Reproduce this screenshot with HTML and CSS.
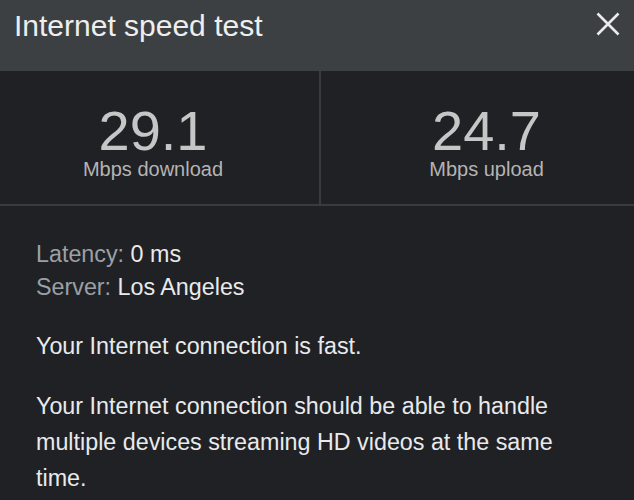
FILE: index.html
```html
<!DOCTYPE html>
<html lang="en">
<head>
    <meta charset="UTF-8">
    <meta name="viewport" content="width=device-width, initial-scale=1.0">
    <title>Internet speed test</title>
    <link rel="stylesheet" href="styles.css">
</head>
<body>

<header class="top-bar">
    <h1>Internet speed test</h1>
    <button class="close-btn" aria-label="Close">
        <svg width="24" height="24" viewBox="0 0 24 24">
            <path d="M1.5 1.5 L22.5 22.5 M22.5 1.5 L1.5 22.5" stroke="#e8eaed" stroke-width="2.6" stroke-linecap="butt" fill="none"/>
        </svg>
    </button>
</header>

<div class="stats">
    <div class="stat stat-down">
        <div class="stat-value">29.1</div>
        <div class="stat-label">Mbps download</div>
    </div>
    <div class="stat stat-up">
        <div class="stat-value">24.7</div>
        <div class="stat-label">Mbps upload</div>
    </div>
</div>

<div class="details">
    <div class="meta">
        <div><span class="meta-key">Latency:</span> 0 ms</div>
        <div><span class="meta-key">Server:</span> Los Angeles</div>
    </div>
    <p>Your Internet connection is fast.</p>
    <p>Your Internet connection should be able to handle multiple devices streaming HD videos at the same time.</p>
</div>

</body>
</html>
```

FILE: styles.css
```css
body {
    margin: 0;
    padding: 0;
    background-color: #202124; /* dark panel */
    color: #e8eaed;
    font-family: "Liberation Sans", Arial, sans-serif;
}

.top-bar {
    height: 71px;
    box-sizing: border-box;
    background-color: #3c4043;
    display: flex;
    justify-content: space-between;
    align-items: flex-start;
    padding: 8px 14px 0 14px;
}

.top-bar h1 {
    margin: 0;
    font-size: 30px;
    font-weight: normal;
    line-height: 36px;
    color: #eeeeee;
}

.close-btn {
    background: none;
    border: none;
    padding: 0;
    margin-top: 4px;
    width: 24px;
    height: 24px;
    cursor: pointer;
}

.close-btn svg {
    display: block;
}

.stats {
    display: grid;
    grid-template-columns: 319px 1fr;
    border-bottom: 2px solid #3a3b3e;
}

.stat {
    display: flex;
    flex-direction: column;
    align-items: center;
    padding: 32px 0 25px 0;
}

.stat-down {
    padding-right: 13px;
}

.stat-up {
    border-left: 2px solid #3a3b3e;
    padding-left: 18px;
}

.stat-value {
    font-size: 56px;
    line-height: 56px;
    color: #c6c6c6;
}

.stat-label {
    font-size: 20px;
    line-height: 20px;
    color: #b4b4b4;
}

.details {
    padding: 32px 37px 0 36px;
    font-size: 23.3px;
}

.meta {
    line-height: 33px;
    margin-bottom: 24px;
}

.meta-key {
    color: #9aa0a6;
}

.details p {
    margin: 0 0 24px 0;
    line-height: 36px;
}
```
